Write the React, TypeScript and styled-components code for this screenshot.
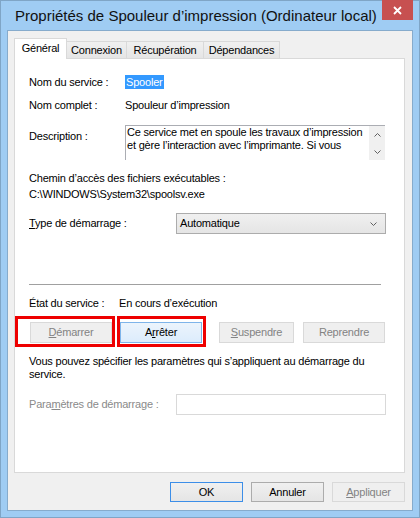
import React from "react";
import styled, { createGlobalStyle } from "styled-components";

const GlobalStyle = createGlobalStyle`
  html, body {
    margin: 0;
    padding: 0;
    background: #fff;
  }
  body {
    font-family: "Liberation Sans", Arial, sans-serif;
    font-size: 11px;
    letter-spacing: -0.2px;
    color: #000;
  }
  * {
    box-sizing: border-box;
  }
`;

type ButtonVariant = "normal" | "default" | "focused" | "disabled";

const App = () => {
  return (
    <>
      <GlobalStyle />
      <Window>
        <TitleBar>
          <Title>Propriétés de Spouleur d’impression (Ordinateur local)</Title>
          <CloseButton aria-label="Fermer">
            <svg width="9" height="9" viewBox="0 0 9 9">
              <path d="M1 1 L8 8 M8 1 L1 8" stroke="#fff" strokeWidth="1.8" />
            </svg>
          </CloseButton>
        </TitleBar>

        <Client>
          <TabStrip>
            <Tab $active>Général</Tab>
            <Tab $w={61}>Connexion</Tab>
            <Tab $w={78}>Récupération</Tab>
            <Tab $w={77}>Dépendances</Tab>
          </TabStrip>

          <Panel>
            <InfoRow $label={96}>
              <Label>Nom du service :</Label>
              <div>
                <Selection>Spooler</Selection>
              </div>
            </InfoRow>
            <InfoRow $label={96} $top={8}>
              <Label>Nom complet :</Label>
              <span>Spouleur d’impression</span>
            </InfoRow>
            <InfoRow $label={96} $top={12} $align="start">
              <Label $pad={4}>Description :</Label>
              <DescBox>
                <DescText>
                  <div>Ce service met en spoule les travaux d’impression</div>
                  <div>et gère l’interaction avec l’imprimante. Si vous</div>
                </DescText>
                <ScrollBar>
                  <ScrollArrow>
                    <svg width="7" height="4" viewBox="0 0 7 4">
                      <path d="M0.5 3.5 L3.5 0.5 L6.5 3.5" stroke="#606060" fill="none" />
                    </svg>
                  </ScrollArrow>
                  <ScrollArrow>
                    <svg width="7" height="4" viewBox="0 0 7 4">
                      <path d="M0.5 0.5 L3.5 3.5 L6.5 0.5" stroke="#606060" fill="none" />
                    </svg>
                  </ScrollArrow>
                </ScrollBar>
              </DescBox>
            </InfoRow>

            <Line $top={11}>Chemin d’accès des fichiers exécutables :</Line>
            <Line $top={1}>{"C:\\WINDOWS\\System32\\spoolsv.exe"}</Line>

            <InfoRow $label={147} $top={11}>
              <Label>
                <u>T</u>ype de démarrage :
              </Label>
              <Combo>
                <span>Automatique</span>
                <svg width="7" height="4" viewBox="0 0 7 4">
                  <path d="M0.5 0.5 L3.5 3.5 L6.5 0.5" stroke="#606060" fill="none" />
                </svg>
              </Combo>
            </InfoRow>

            <Separator />

            <InfoRow $label={90} $top={11}>
              <Label>État du service :</Label>
              <span>En cours d’exécution</span>
            </InfoRow>

            <ButtonRow>
              <Button $variant="disabled" $w={82} disabled>
                <u>D</u>émarrer
              </Button>
              <Button $variant="focused" $w={82} $gap={8}>
                A<u>r</u>rêter
              </Button>
              <Button $variant="disabled" $w={75} $gap={17} disabled>
                <u>S</u>uspendre
              </Button>
              <Button $variant="disabled" $w={82} $gap={9} disabled>
                Reprendre
              </Button>
              <Mark $left={-14} $width={100} />
              <Mark $left={88} $width={89} />
            </ButtonRow>

            <Paragraph>
              Vous pouvez spécifier les paramètres qui s’appliquent au démarrage du
              service.
            </Paragraph>

            <InfoRow $label={147} $top={13}>
              <Label $muted>
                Para<u>m</u>ètres de démarrage :
              </Label>
              <TextInput disabled />
            </InfoRow>
          </Panel>

          <Footer>
            <Button $variant="default" $w={73} $h={20}>
              OK
            </Button>
            <Button $variant="normal" $w={73} $h={20} $gap={8}>
              Annuler
            </Button>
            <Button $variant="disabled" $w={73} $h={20} $gap={8} disabled>
              <u>A</u>ppliquer
            </Button>
          </Footer>
        </Client>
      </Window>
    </>
  );
};

export default App;

const Window = styled.div`
  width: 420px;
  height: 518px;
  display: flex;
  flex-direction: column;
  background: #9fccf3;
  border: 1px solid #7fa5c6;
`;

const TitleBar = styled.div`
  height: 29px;
  display: flex;
  align-items: flex-start;
`;

const Title = styled.div`
  padding-left: 14px;
  line-height: 29px;
  font-size: 15px;
  letter-spacing: 0;
  color: #111;
  white-space: nowrap;
`;

const CloseButton = styled.div`
  width: 31px;
  height: 20px;
  margin: -1px 6px 0 auto;
  background: #c75050;
  display: grid;
  place-items: center;
`;

const Client = styled.div`
  flex: 1;
  margin: 0 6px 6px;
  border: 1px solid #86abcc;
  background: #f0f0f0;
  padding: 7px 7px 8px 6px;
  display: flex;
  flex-direction: column;
`;

const TabStrip = styled.div`
  height: 20px;
  display: flex;
  align-items: flex-end;
`;

const Tab = styled.div<{ $active?: boolean; $w?: number }>`
  position: relative;
  width: ${(p) => p.$w ?? 53}px;
  height: ${(p) => (p.$active ? 21 : 17)}px;
  margin-bottom: ${(p) => (p.$active ? -1 : 0)}px;
  margin-left: ${(p) => (p.$active ? 0 : -1)}px;
  z-index: ${(p) => (p.$active ? 1 : 0)};
  border: 1px solid #d9d9d9;
  border-bottom: none;
  background: ${(p) =>
    p.$active ? "#fff" : "linear-gradient(#f0f0f0, #e5e5e5)"};
  display: flex;
  align-items: center;
  justify-content: center;
  padding-bottom: ${(p) => (p.$active ? 2 : 0)}px;
  white-space: nowrap;
`;

const Panel = styled.div`
  flex: 1;
  display: flex;
  flex-direction: column;
  background: #fff;
  border: 1px solid #d9d9d9;
  padding: 16px 0 0 14px;
`;

const InfoRow = styled.div<{ $label: number; $top?: number; $align?: string }>`
  display: grid;
  grid-template-columns: ${(p) => p.$label}px auto;
  justify-content: start;
  align-items: ${(p) => p.$align ?? "center"};
  margin-top: ${(p) => p.$top ?? 0}px;
  line-height: 15px;
  white-space: nowrap;
`;

const Label = styled.span<{ $pad?: number; $muted?: boolean }>`
  padding-top: ${(p) => p.$pad ?? 0}px;
  color: ${(p) => (p.$muted ? "#8a8a8a" : "#000")};
`;

const Selection = styled.span`
  display: inline-block;
  line-height: 14px;
  padding: 0 1px;
  background: #3399ff;
  color: #fff;
`;

const DescBox = styled.div`
  width: 260px;
  height: 35px;
  display: flex;
  border-top: 1px solid #abadb3;
  border-left: 1px solid #abadb3;
  overflow: hidden;
`;

const DescText = styled.div`
  flex: 1;
  padding-left: 1px;
  line-height: 13px;
  overflow: hidden;
`;

const ScrollBar = styled.div`
  width: 16px;
  background: #f0f0f0;
  display: flex;
  flex-direction: column;
`;

const ScrollArrow = styled.div`
  height: 17px;
  display: grid;
  place-items: center;

  svg {
    display: block;
  }
`;

const Line = styled.div<{ $top: number }>`
  margin-top: ${(p) => p.$top}px;
  line-height: 15px;
  white-space: nowrap;
`;

const Combo = styled.div`
  width: 210px;
  height: 21px;
  border: 1px solid #acacac;
  background: linear-gradient(#f0f0f0, #e5e5e5);
  display: flex;
  align-items: center;
  justify-content: space-between;
  padding: 0 8px 0 3px;
`;

const Separator = styled.div`
  width: 352px;
  height: 1px;
  margin-top: 50px;
  background: #a0a0a0;
`;

const ButtonRow = styled.div`
  position: relative;
  display: flex;
  margin-top: 11px;
  padding-left: 1px;
`;

const Button = styled.button<{
  $variant: ButtonVariant;
  $w: number;
  $h?: number;
  $gap?: number;
}>`
  width: ${(p) => p.$w}px;
  height: ${(p) => p.$h ?? 21}px;
  margin: 0 0 0 ${(p) => p.$gap ?? 0}px;
  padding: 0;
  font: inherit;
  letter-spacing: inherit;
  line-height: 1;
  border: 1px solid
    ${(p) =>
      p.$variant === "disabled"
        ? "#d9d9d9"
        : p.$variant === "focused"
          ? "#7eb4ea"
          : p.$variant === "default"
            ? "#3c8ee8"
            : "#acacac"};
  background: ${(p) =>
    p.$variant === "disabled"
      ? "#efefef"
      : p.$variant === "focused"
        ? "linear-gradient(#ecf4fc, #dcecfc)"
        : "linear-gradient(#f0f0f0, #e5e5e5)"};
  color: ${(p) => (p.$variant === "disabled" ? "#838383" : "#000")};
`;

const Mark = styled.span<{ $left: number; $width: number }>`
  position: absolute;
  top: -6px;
  left: ${(p) => p.$left}px;
  width: ${(p) => p.$width}px;
  height: 31px;
  border: 3px solid #ee0000;
  pointer-events: none;
`;

const Paragraph = styled.p`
  margin: 12px 0 0;
  width: 360px;
  line-height: 13px;
`;

const TextInput = styled.input`
  width: 210px;
  height: 21px;
  border: 1px solid #d9d9d9;
  background: #fff;
  padding: 0 3px;
  font: inherit;
`;

const Footer = styled.div`
  display: flex;
  justify-content: flex-end;
  margin-top: 9px;
`;
